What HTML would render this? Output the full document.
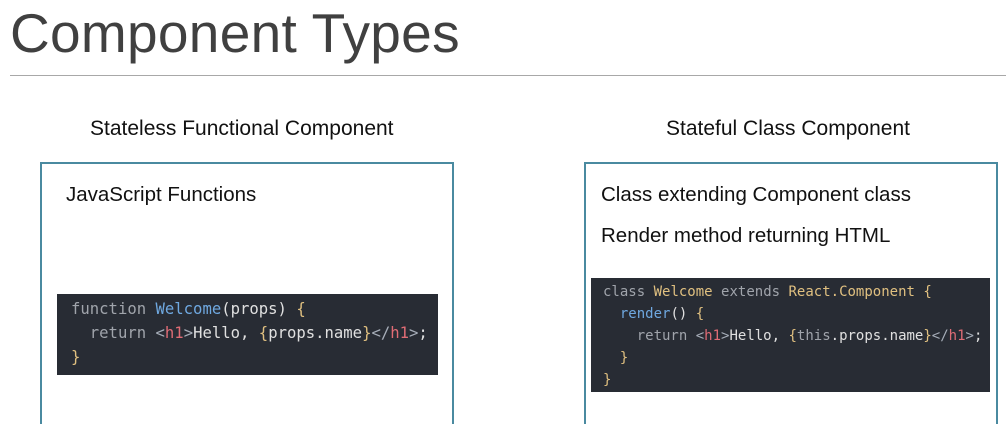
<!DOCTYPE html>
<html><head><style>
body{margin:0;width:1006px;height:410px;background:#fff;position:relative;overflow:hidden;font-family:"Liberation Sans",sans-serif;}
.a{position:absolute;white-space:nowrap;}
.t{left:10px;top:1px;font-size:55px;color:#404040;letter-spacing:0.3px;}
.hr{left:10px;top:75px;width:996px;height:1px;background:#a8a8a8;}
.h{font-size:21px;color:#111;top:117px;}
.box{border:2px solid #4a8aa0;border-bottom:none;height:260px;top:162px;}
.p{font-size:20.5px;color:#111;}
.code{background:#282c34;font-family:"DejaVu Sans Mono","Liberation Mono",monospace;font-size:14px;color:#e0e0e0;padding:0 0 0 14px;box-sizing:border-box;}
.code div{white-space:pre;}
.k{color:#a0a4ab}.b{color:#6fa8e0}.y{color:#e0c080}.r{color:#e06c75}.g{color:#a6adb8}
</style></head><body>
<div class="a t">Component Types</div>
<div class="a hr"></div>
<div class="a h" style="left:90px">Stateless Functional Component</div>
<div class="a h" style="left:666px">Stateful Class Component</div>
<div class="a box" style="left:40px;width:410px"></div>
<div class="a box" style="left:584px;width:410px"></div>
<div class="a p" style="left:66px;top:183px">JavaScript Functions</div>
<div class="a p" style="left:601px;top:183px">Class extending Component class</div>
<div class="a p" style="left:601px;top:224px">Render method returning HTML</div>
<div class="a code" style="left:57px;top:294px;width:381px;height:81px;padding-top:3px;line-height:24px;font-size:15.6px">
<div><span class="k">function</span> <span class="b">Welcome</span>(props) <span class="y">{</span></div>
<div>  <span class="k">return</span> <span class="g">&lt;</span><span class="r">h1</span><span class="g">&gt;</span>Hello, <span class="y">{</span>props.name<span class="y">}</span><span class="g">&lt;/</span><span class="r">h1</span><span class="g">&gt;</span>;</div>
<div><span class="y">}</span></div>
</div>
<div class="a code" style="left:591px;top:278px;width:399px;height:114px;padding-top:3px;line-height:22px;padding-left:12px">
<div><span class="k">class</span> <span class="y">Welcome</span> <span class="k">extends</span> <span class="y">React.Component</span> <span class="y">{</span></div>
<div>  <span class="b">render</span>() <span class="y">{</span></div>
<div>    <span class="k">return</span> <span class="g">&lt;</span><span class="r">h1</span><span class="g">&gt;</span>Hello, <span class="y">{</span><span class="k">this</span>.props.name<span class="y">}</span><span class="g">&lt;/</span><span class="r">h1</span><span class="g">&gt;</span>;</div>
<div>  <span class="y">}</span></div>
<div><span class="y">}</span></div>
</div>
</body></html>
